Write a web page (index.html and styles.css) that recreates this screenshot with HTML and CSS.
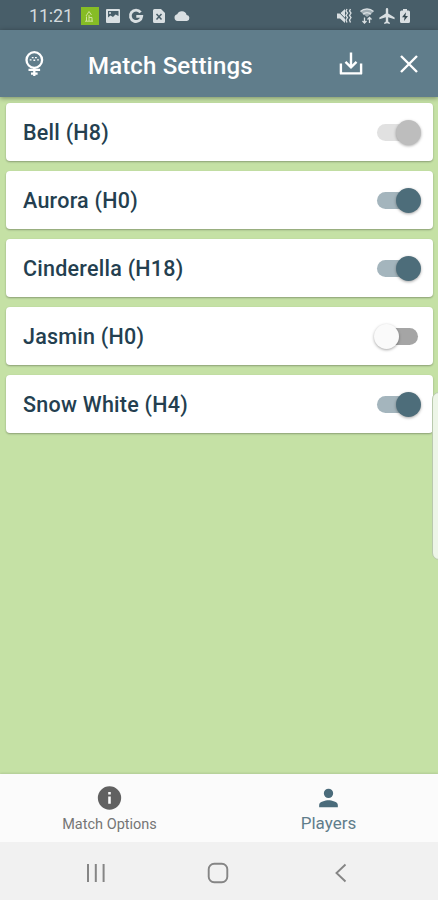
FILE: index.html
```html
<!DOCTYPE html>
<html lang="en">
<head>
<meta charset="utf-8">
<title>Match Settings</title>
<link rel="stylesheet" href="styles.css">
</head>
<body>
<div class="phone">
  <header class="status">
    <span class="clock">11:21</span>
    <svg class="app-badge" width="18" height="18" viewBox="0 0 18 18"><rect width="18" height="18" fill="#86bc25"/><path d="M5 9 8 4.500 10.500 8M5.500 9.500v4.500M4 14.200h8M8 8v6M8 10.500h3v3.500" fill="none" stroke="#cfe39d" stroke-width="1"/></svg>
    <svg class="s-image" width="16" height="16" viewBox="0 0 16 16"><rect x="1" y="1" width="14" height="14" rx="1" fill="#d9dfe2"/><path d="M3 3h10.500v5L10.500 6.500 8 9 5.500 7.500 3 9.500z" fill="#485e69"/><circle cx="5" cy="5" r="1" fill="#d9dfe2"/></svg>
    <svg class="s-google" width="16" height="16" viewBox="0 0 16 16"><path d="M12.600 4.400A5.700 5.700 0 1 0 13.700 8.300H8.300" fill="none" stroke="#d9dfe2" stroke-width="2.800"/></svg>
    <svg class="s-file" width="14" height="16" viewBox="0 0 14 16"><path d="M2.500 1h6.500L13 5v8.500a1.500 1.500 0 0 1-1.500 1.500h-9A1.500 1.500 0 0 1 1 13.500v-11A1.500 1.500 0 0 1 2.500 1z" fill="#d9dfe2"/><path d="m4.500 6 5 5.500m0-5.500-5 5.500" stroke="#485e69" stroke-width="1.500"/></svg>
    <svg class="s-cloud" width="18" height="12" viewBox="0 0 18 12"><path d="M4.500 11a3.400 3.400 0 0 1-.3-6.700A5 5 0 0 1 13.600 4.900 3.100 3.100 0 0 1 14 11z" fill="#d9dfe2"/></svg>
    <span class="spacer"></span>
    <svg class="s-mute" width="18" height="18" viewBox="0 0 18 18"><path d="M2 6.500h3L10 2v14l-5-4.500H2z" fill="#d9dfe2"/><path d="m1.500 2.500 13 13.500" stroke="#485e69" stroke-width="1"/><path d="m12 2-1 2 1.500 2-1.500 2.500 1.500 2L11 13l1 2.500M15.500 2l-1 2L16 6l-1.500 2.500 1.500 2-1.500 2.500 1 2.500" fill="none" stroke="#d9dfe2" stroke-width="1.300"/></svg>
    <svg class="s-wifi" width="16" height="18" viewBox="0 0 16 18"><path d="M1.500 4.700a9.500 9.500 0 0 1 13 0L8 10z" fill="#a0adb4"/><path d="M1.500 4.500a9.500 9.500 0 0 1 13 0M4 7.300a6 6 0 0 1 8 0" fill="none" stroke="#d9dfe2" stroke-width="1.500"/><path d="M5.500 10.500V16m-2-2 2 2 2-2m3 2v-5.500m-2 2 2-2 2 2" fill="none" stroke="#d9dfe2" stroke-width="1.300"/></svg>
    <svg class="s-plane" width="16" height="16" viewBox="2 2 20 20"><path transform="translate(.5)" d="M21 16v-2l-8-5V3.500a1.500 1.500 0 0 0-3 0V9l-8 5v2l8-2.500V19l-2 1.500V22l3.500-1 3.500 1v-1.500L13 19v-5.500z" fill="#d9dfe2"/></svg>
    <svg class="s-battery" width="12" height="16" viewBox="0 0 12 16"><path d="M4 1h4v1.500h1.500Q11 2.500 11 4v9.500Q11 15 9.500 15h-7Q1 15 1 13.500V4q0-1.500 1.500-1.500H4z" fill="#d9dfe2"/><path d="M7 4.200 3 9.300h2.600L5 13l4-5H6.400z" fill="#344850"/></svg>
  </header>

  <div class="appbar">
    <svg class="logo" width="20" height="28" viewBox="0 0 20 28" fill="none" stroke="#fff"><circle cx="10.300" cy="10" r="7.800" stroke-width="2.300"/><path d="M4.500 19.800h11.600M10.300 18v8M7 23.700h6.600" stroke-width="2.300"/><path d="M6.600 10.600V9.200M8.700 8.300V6.900M11.900 8.300V6.900M10.300 10.900V9.500M14 10.600V9.200" stroke-width="1.800"/></svg>
    <h1 class="title">Match Settings</h1>
    <svg class="download" width="26" height="26" viewBox="0 0 26 26" fill="none" stroke="#fff" stroke-width="2.400"><path d="M2.900 12.500v9.900h20.200V12.500" stroke-linejoin="round"/><path d="M13 1.500v14.500M7.500 10.800l5.500 5.500 5.500-5.500"/></svg>
    <svg class="close" width="20" height="20" viewBox="0 0 20 20" stroke="#fff" stroke-width="2.400"><path d="m2 2 16 16m0-16L2 18"/></svg>
  </div>

  <main class="players">
    <section class="card"><span class="name">Bell (H8)</span><i class="switch disabled"></i></section>
    <section class="card"><span class="name">Aurora (H0)</span><i class="switch"></i></section>
    <section class="card"><span class="name">Cinderella (H18)</span><i class="switch"></i></section>
    <section class="card"><span class="name">Jasmin (H0)</span><i class="switch off"></i></section>
    <section class="card"><span class="name">Snow White (H4)</span><i class="switch"></i></section>
    <div class="edge-handle"></div>
  </main>

  <nav class="tabs">
    <div class="tab">
      <svg width="29" height="28" viewBox="0 0 24 24"><path d="M12 2a10 10 0 1 0 0 20 10 10 0 0 0 0-20zm1.100 15h-2.200v-6.200h2.200zm0-8h-2.200V6.800h2.200z" fill="#616161"/></svg>
      <span class="tab-label">Match Options</span>
    </div>
    <div class="tab active">
      <svg width="29" height="28" viewBox="0 0 24 24"><path d="M12 12a4 4 0 1 0 0-8 4 4 0 0 0 0 8zm0 2c-2.700 0-8 1.300-8 4v2h16v-2c0-2.700-5.300-4-8-4z" fill="#4a6b7a"/></svg>
      <span class="tab-label">Players</span>
    </div>
  </nav>

  <footer class="system">
    <svg width="20" height="20" viewBox="0 0 20 20" stroke="#858585" stroke-width="2"><path d="M2 1v18M9.800 1v18M17.600 1v18"/></svg>
    <svg class="home" width="22" height="22" viewBox="0 0 22 22" fill="none" stroke="#858585" stroke-width="1.900"><rect x="1.700" y="1.700" width="18.600" height="18.600" rx="5.500"/></svg>
    <svg width="14" height="20" viewBox="0 0 14 20" fill="none" stroke="#858585" stroke-width="1.900"><path d="M11.500 1.500 2.500 10l9 8.500"/></svg>
  </footer>
</div>
</body>
</html>
```
FILE: styles.css
```css
* { box-sizing: border-box; }

body {
  margin: 0;
  font-family: Roboto, "Liberation Sans", sans-serif;
}

svg { display: block; flex: none; }

.phone {
  width: 438px;
  height: 900px;
  display: flex;
  flex-direction: column;
  overflow: hidden;
  background: #c5e1a5;
}

.status {
  flex: none;
  height: 30px;
  padding: 1px 27px 0 29px;
  display: flex;
  align-items: center;
  background: #485e69;
}

.clock {
  width: 45px;
  color: #d3dade;
  font-size: 18px;
  letter-spacing: -.2px;
  line-height: 30px;
}

.app-badge { margin-left: 7px; }
.s-image { margin-left: 6px; }
.s-google { margin-left: 7px; }
.s-file { margin-left: 8px; }
.s-cloud { margin-left: 7px; }
.spacer { flex: 1; }
.s-wifi { margin-left: 6px; }
.s-plane { margin-left: 4px; }
.s-battery { margin-left: 4px; }

.appbar {
  position: relative;
  flex: none;
  height: 67px;
  padding: 0 19px 0 24px;
  display: flex;
  align-items: center;
  background: #607d8b;
  box-shadow: 0 1px 5px rgba(0, 0, 0, .4);
}

.title {
  flex: 1;
  margin: 4px 0 0 44px;
  color: #fff;
  font-size: 24px;
  line-height: 30px;
  font-weight: 500;
  letter-spacing: .15px;
  white-space: nowrap;
}

.download { margin-right: 35px; }

.players {
  position: relative;
  flex: 1;
  padding: 6px 5px 0 6px;
  display: flex;
  flex-direction: column;
  gap: 10px;
}

.card {
  height: 58px;
  padding: 0 12px 0 17px;
  display: flex;
  align-items: center;
  justify-content: space-between;
  border-radius: 4px;
  background: #fff;
  box-shadow: 0 1px 2px rgba(0, 0, 0, .3);
}

.name {
  padding-top: 1px;
  color: #243f50;
  font-size: 21.500px;
  font-weight: 500;
  letter-spacing: .25px;
}

.switch {
  position: relative;
  width: 44px;
  height: 25px;
  padding-right: 3px;
  display: flex;
  align-items: center;
  justify-content: flex-end;
}

.switch::before {
  content: "";
  width: 41px;
  height: 17px;
  border-radius: 9px;
  background: #a4b5bd;
}

.switch::after {
  content: "";
  position: absolute;
  right: 0;
  top: 0;
  width: 25px;
  height: 25px;
  border-radius: 50%;
  background: #4d6d7a;
  box-shadow: 0 1px 3px rgba(0, 0, 0, .35);
}

.disabled::before { background: #e1e1e1; }
.disabled::after { background: #bdbdbd; }
.off::before { background: #a5a5a5; }
.off::after { right: 22px; background: #fafafa; }

.edge-handle {
  position: absolute;
  right: -8px;
  top: 295px;
  width: 14px;
  height: 168px;
  border: 1px solid #b9c9ad;
  border-radius: 8px;
  background: #edf5e7;
}

.tabs {
  flex: none;
  height: 68px;
  display: flex;
  background: #fbfbfb;
  box-shadow: 0 -1px 2px rgba(0, 0, 0, .1);
}

.tab {
  flex: 1;
  padding-top: 10px;
  display: flex;
  flex-direction: column;
  align-items: center;
  color: #757575;
  font-size: 14.500px;
}

.tab-label { margin-top: 4px; line-height: 18px; }
.active { color: #607d8b; font-size: 17px; }
.active .tab-label { margin-top: 2px; }

.system {
  flex: none;
  height: 58px;
  padding: 3px 90px 0 86px;
  display: flex;
  align-items: center;
  justify-content: space-between;
  background: #f1f1f1;
}

.home { margin-right: 4px; }
```
